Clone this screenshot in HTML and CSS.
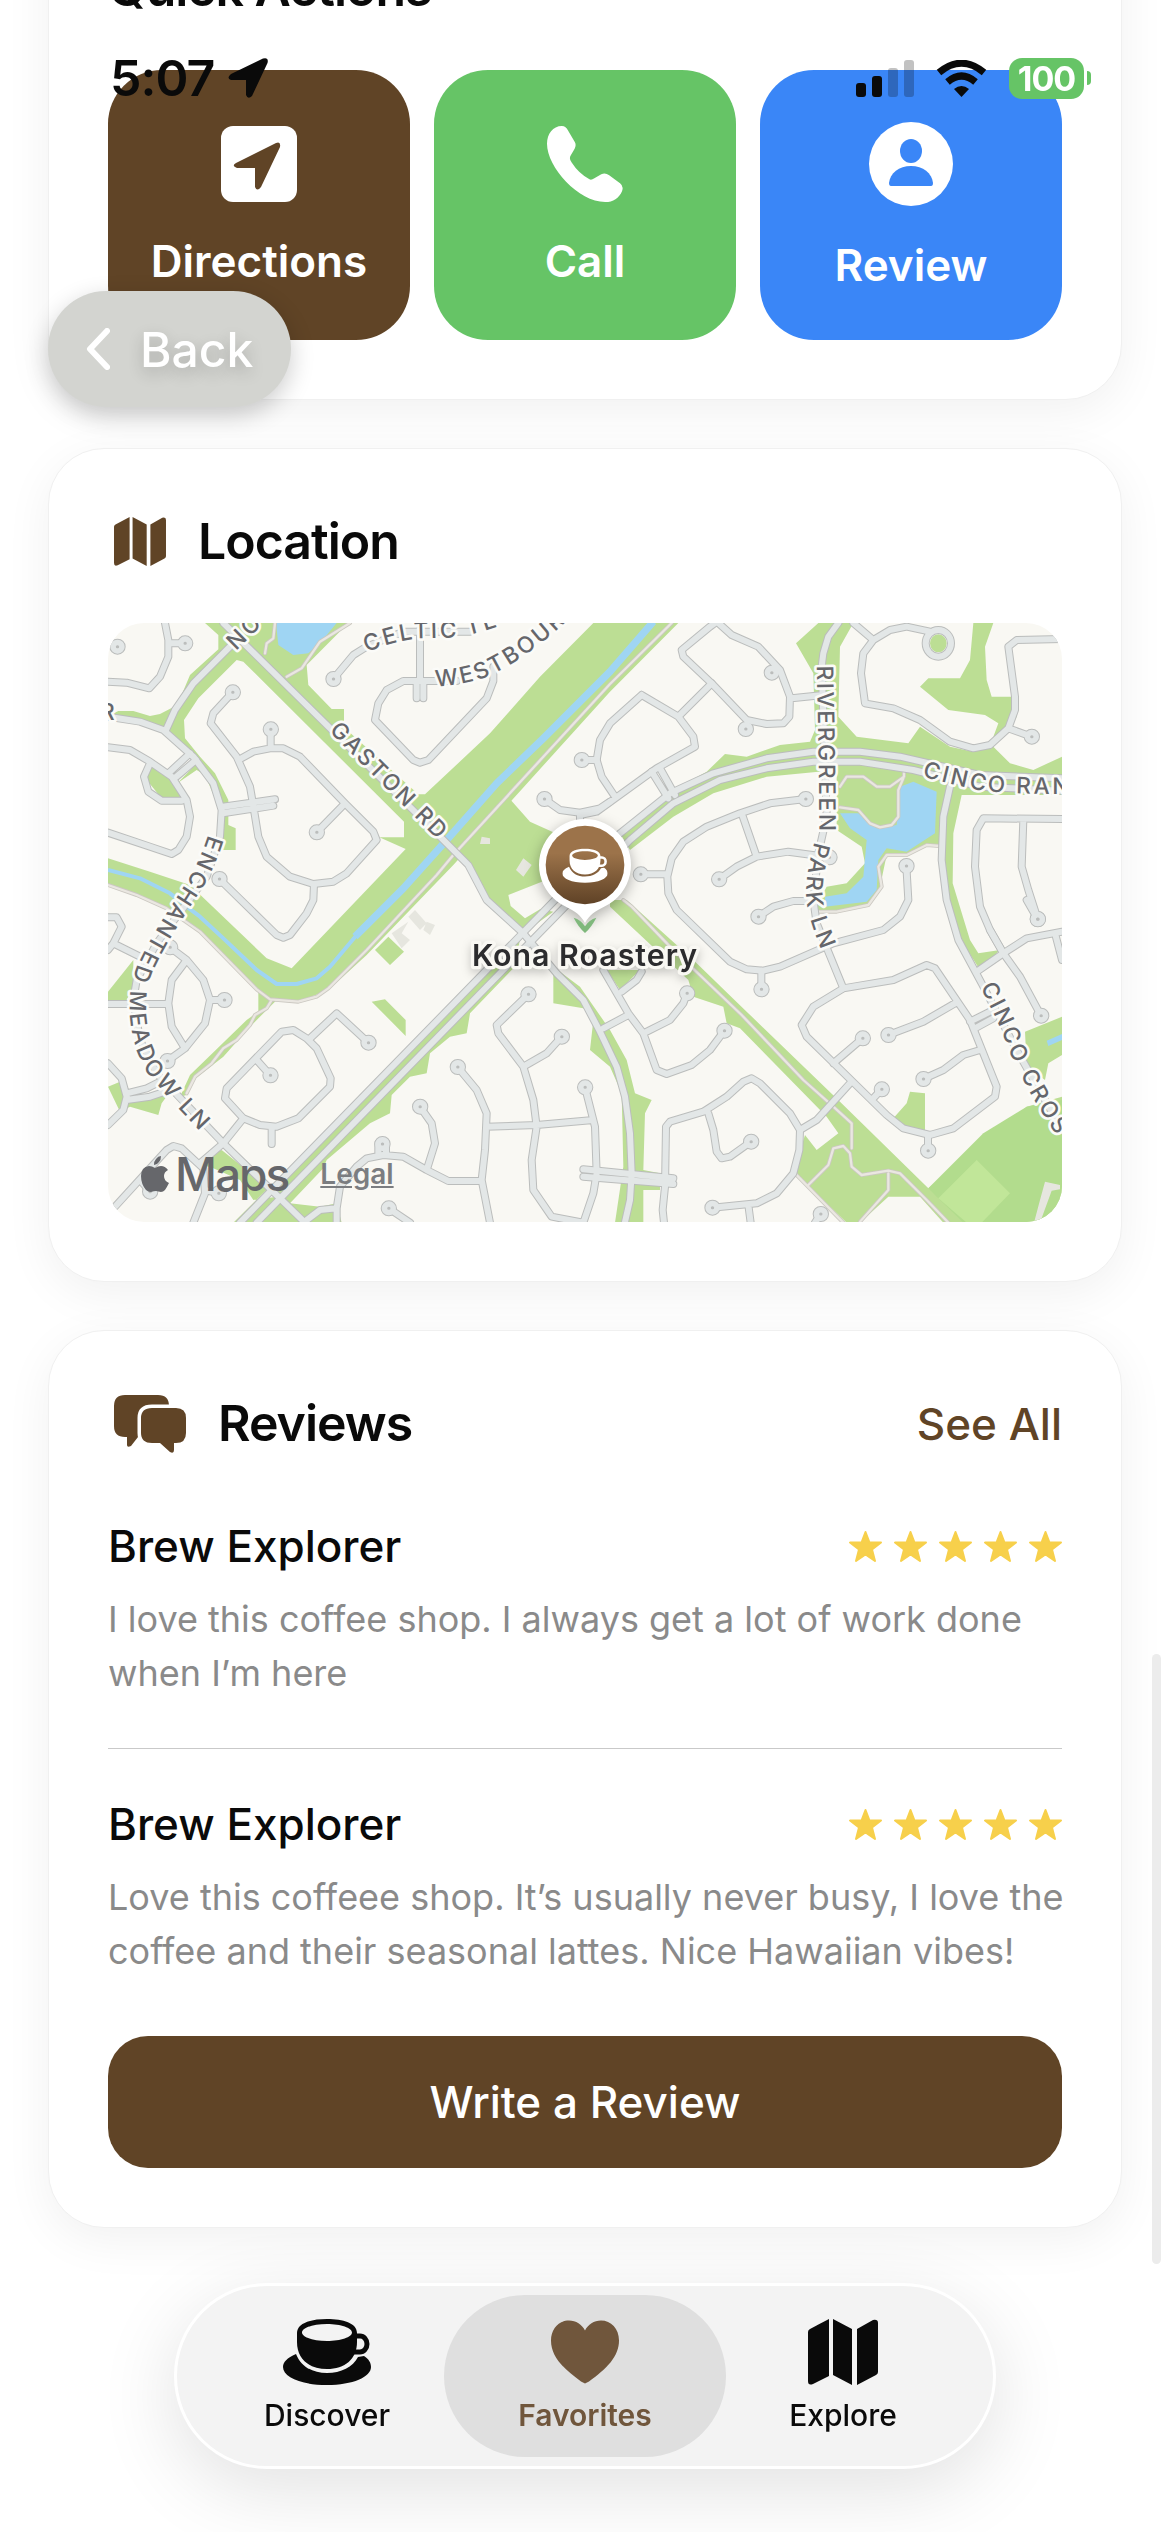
FILE: index.html
```html
<!DOCTYPE html>
<html lang="en">
<head>
    <meta charset="UTF-8">
    <meta name="viewport" content="width=device-width, initial-scale=1.0">
    <title>Kona Roastery</title>
    <link rel="stylesheet" href="styles.css">
</head>
<body>
    <!-- Shared icons -->
    <svg class="sprite" aria-hidden="true">
        <symbol id="icon-cup" viewBox="0 0 88 66">
            <path fill-rule="evenodd" d="M14 14C14 4 28 0 44 0S74 4 74 14V23C74 40 62 50 44 50S14 40 14 23ZM19 13.500C19 18 30 22 44 22S69 18 69 13.500S58 5 44 5S19 9 19 13.500Z"/>
            <path d="M73 17h4a7 8 0 0 1 0 16h-6" fill="none" stroke="currentColor" stroke-width="5"/>
            <path d="M13 35C4 39 0 43 0 48C0 58 18 66 44 66S88 58 88 48C88 44 86 40 81 37L75 38C70 48 58 54 44 54S18 48 13 35Z"/>
        </symbol>
        <symbol id="icon-map" viewBox="0 0 70 66">
            <path d="M0 13Q0 11 2 10L21 0V57L5 65Q0 67 0 62ZM25 0L44 10V66L25 56ZM49 10L65 1Q70 0 70 4V53Q70 55 68 56L49 66Z"/>
        </symbol>
        <symbol id="icon-star" viewBox="0 0 33 31">
            <path stroke="currentColor" stroke-width="2" stroke-linejoin="round" d="M16.500 1L20.500 11.500H32L23 18.500L26 30L16.500 23.500L7 30L10 18.500L1 11.500H12.500Z"/>
        </symbol>
    </svg>

    <header class="status-bar">
        <div class="status-left">
            <time>5:07</time>
            <svg class="icon-arrow" viewBox="0 0 40 40"><path d="M3 16L35 0.500Q41 -1 39.500 5L24 38Q20 42 18 37V22H3Q-2 20 3 16Z"/></svg>
        </div>
        <div class="status-right">
            <svg class="icon-signal" viewBox="0 0 58 37">
                <rect x="0" y="23" width="10" height="14" rx="3"/>
                <rect x="16" y="16" width="10" height="21" rx="3"/>
                <rect x="32" y="8" width="10" height="29" rx="3" opacity=".25"/>
                <rect x="48" y="0" width="10" height="37" rx="3" opacity=".25"/>
            </svg>
            <svg class="icon-wifi" viewBox="0 0 51 37">
                <path d="M3 12.500Q25.500 -6 48 12.500M11.500 22Q25.500 10 39.500 22" fill="none" stroke="currentColor" stroke-width="7"/>
                <path d="M25.500 37L18 29Q25.500 23 33 29Z"/>
            </svg>
            <div class="battery"><span>100</span></div>
        </div>
    </header>

    <button class="back-button" type="button">
        <svg viewBox="0 0 24 42"><path d="M21 3L4 21L21 39"/></svg>
        Back
    </button>

    <main>
        <section class="card">
            <h2>Quick Actions</h2>
            <div class="actions">
                <button class="action directions" type="button">
                    <svg class="icon-76" viewBox="0 0 76 76"><rect width="76" height="76" rx="12"/><path class="cut" d="M15 37L55 17Q60 15 59 21L40 61Q36 66 34 61V42H16Q10 40 15 37Z"/></svg>
                    Directions
                </button>
                <button class="action call" type="button">
                    <svg class="icon-76" viewBox="0 0 77 77"><path d="M15 0C18 0 20 2 21 4L28 16Q30 19 28 23L24 30Q22 33 25 37Q32 48 43 54Q45 55 48 53L55 49Q59 47 63 50L74 58Q78 61 76 66C73 73 67 77 59 77C32 77 0 42 0 18C0 8 6 0 15 0Z"/></svg>
                    Call
                </button>
                <button class="action review" type="button">
                    <svg class="icon-84" viewBox="0 0 84 84"><circle cx="42" cy="42" r="42"/><ellipse class="cut" cx="42" cy="29" rx="11" ry="12"/><path class="cut" d="M20 61C21 51 30 44 42 44S63 51 64 61Q64 64 62 64H22Q20 64 20 61Z"/></svg>
                    Review
                </button>
            </div>
        </section>

        <section class="card">
            <h2><svg class="icon-title-map"><use href="#icon-map"/></svg>Location</h2>
            <div class="map">
                <svg class="map-canvas" viewBox="0 0 2862 1797" preserveAspectRatio="xMidYMid slice">
                    <defs>
                        <!-- Streets, one group per map tile -->
                        <g id="streets">
                            <g transform="translate(-54 -39)">
                                <path d="M400 39L1050 680L1135 765L1190 870L1300 970L1400 1090L1480 1170L1530 1265L1580 1370L1605 1460L1620 1570L1625 1690L1620 1770L1600 1858"/>
                                <path d="M420 110L310 220L255 300L228 360M54 215L110 218L178 235L210 200L235 140V90L225 39M237 100H285"/>
                                <path d="M54 320L150 335L220 360L310 440L370 520L395 600L390 680L350 800L200 1000L140 1110L130 1170L150 1290L200 1390L400 1600L645 1838"/>
                                <path d="M54 412L120 420L180 455L245 500L290 570L300 620L290 680L265 720L245 732L180 710L54 668M180 460L162 500L175 545L215 572H275M300 430L235 490M318 450L250 508"/>
                                <path d="M428 247L370 310L362 340L440 440L480 530L492 600L505 680L530 740L600 800L670 822L730 815L770 790L860 690L850 665L765 580L630 440L580 415H540L490 425L445 450M542 360V415M680 667L765 580M398 590L555 568M398 610L550 587"/>
                                <path d="M388 807L560 975L580 983L600 975L650 910L670 870L672 822M730 207L790 135L830 110L940 65H1140M990 60V213M980 265V213M1000 265V213"/>
                                <path d="M1210 170V213L1190 265L1015 450L990 458L970 450L855 330L865 280L890 240L940 213H1100M1475 450H1520M1363 567L1410 600L1470 608L1530 595L1560 575M1470 608V660"/>
                            </g>
                            <g transform="translate(1416 -69)">
                                <path d="M0 480H50M185 285L90 370L60 420L50 480L65 530L105 590M185 285L295 350L340 410L345 440L230 505L50 635L0 645M295 350L395 250L310 170L305 150L390 80L405 69"/>
                                <path d="M415 69L455 105L535 140L600 210L630 290L628 350L610 370L560 372L500 360L395 250M635 295L730 285M775 69L745 110L730 160L725 200L740 650L715 760L700 900L710 970L790 1165"/>
                                <path d="M820 69L880 120L930 90L980 80L1050 95M880 120L850 160L843 220L855 310L940 325L1020 360L1110 425L1180 445L1230 435L1285 385L1305 330V290L1285 140L1310 120L1446 117M1285 385L1355 410M1037 130a38 40 0 1 0 76 0a38 40 0 1 0 -76 0"/>
                                <path d="M677 597L570 610L480 640L380 680L310 725L275 775L262 830L265 880L290 930L450 1085L500 1108L550 1112L600 1100L760 1030L910 990L960 950L985 900L979 798M182 823H262M485 640L530 770M417 838L470 800L530 770L625 755L748 772M535 950L580 920L640 903H700"/>
                                <path d="M1110 560L1090 650L1085 780L1100 900L1135 1020L1205 1150L1310 1350L1446 1590M1446 657L1210 655L1190 690L1185 800L1200 920L1230 990L1270 1060M1330 660L1325 800L1345 870L1373 957M215 515L265 595M240 505L285 585"/>
                                <path d="M-1020 1868L-80 905L120 700L270 580L400 520L560 475L700 455H840L960 470L1200 525L1446 535M-970 1868L-50 925L150 720L280 610L420 540L560 505L700 485H840L1000 510L1200 560L1446 572"/>
                            </g>
                            <g transform="translate(-54 651)">
                                <path d="M54 232H80L95 260L70 310L54 330M70 310L150 350M240 322L290 360L340 420L360 480L345 550L285 625L232 663M290 360L245 420L235 490L245 560L285 625M54 492H235M360 480H403"/>
                                <path d="M54 670L95 715L110 770L100 810L54 855M110 760L170 745L220 720M110 780L180 770L240 750M330 970L400 910L460 835M575 575L410 745L405 775L460 835L510 855L560 860L625 835L720 740L722 715L680 625L650 595L610 570ZM655 600L740 520L835 608M500 660L541 706M545 860V912"/>
                                <path d="M75 1100L230 930L250 918L275 925L340 985L345 1060L310 1148M180 1055L150 1020M345 1050L386 1060M640 1148L690 1110L740 1105L750 1040L800 980L830 955L880 945L940 950L1010 990L1075 1023H1170M740 1100V1148M865 945V910M888 945V910M1010 990L1035 910L1025 850L990 800M896 1105L960 1148"/>
                                <path d="M1103 681L1160 750L1190 820L1185 930L1175 1020L1200 1148M1190 860L1340 855L1510 840M1315 463L1220 555L1225 580L1300 680L1330 780L1340 860L1325 960L1330 1050L1385 1130L1480 1148L1510 1060L1520 1000L1515 860L1485 742M1300 680L1370 640L1415 590"/>
                            </g>
                            <g transform="translate(1356 831)">
                                <path d="M604 212V268M850 265L1000 240L1100 195L1125 205L1230 360L1310 560L1305 590L1180 685L1110 705L1030 685L980 645L740 410L725 375L760 320L850 265M820 490L908 415M985 405L1090 365L1185 310M1090 537L1150 510L1210 465L1260 450M935 600L965 568M1104 705V752M1230 365L1290 335M1245 385L1300 355"/>
                                <path d="M870 550L770 660L720 690L690 640L600 550L575 535L550 545L500 590L430 635L330 665L318 680L315 860L308 930L312 968M720 690L718 750L700 820L650 880L590 910L457 923M565 915L572 968M445 640L460 690L470 755L485 775L510 770L573 725M782 942L765 968"/>
                                <path d="M1250 215L1330 160L1400 115L1506 95M1290 90L1330 160L1380 230L1443 347M1400 0L1433 58M1485 100L1506 180M130 385L205 345M130 210L205 340L250 400L290 510L320 522L395 495L450 450L493 392M250 400L330 360L370 310L381 280M185 275L230 240L245 215"/>
                                <path d="M70 808L340 835M70 830L340 852"/>
                            </g>
                        </g>
                        <!-- Turning circles at the street ends -->
                        <g id="bulbs">
                            <path transform="translate(-54 -39)" d="M285 100h1M82 110h1M428 247h1M542 358h1M680 667h1M388 807h1M730 207h1M1475 450h1M1363 567h1"/>
                            <path transform="translate(1416 -69)" d="M575 218h1M497 387h1M677 597h1M182 823h1M417 838h1M748 772h1M535 950h1M979 798h1M1355 410h1M1373 957h1"/>
                            <path transform="translate(-54 651)" d="M240 322h1M232 663h1M403 480h1M541 706h1M835 608h1M180 1055h1M386 1060h1M877 912h1M990 800h1M896 1105h1M1103 681h1M1315 463h1M1415 590h1M1485 742h1"/>
                            <path transform="translate(1356 831)" d="M604 268h1M908 415h1M985 405h1M1090 537h1M965 568h1M1104 752h1M457 923h1M573 725h1M782 942h1M1433 58h1M1443 347h1M381 280h1M493 392h1"/>
                        </g>
                        <g id="trails">
                            <path transform="translate(-54 -39)" d="M1745 39L1560 222L1090 735L1040 795L830 1020L715 1135L680 1160L625 1175L540 1168L500 1138L330 965L230 895L140 855L54 825M780 39L690 95L635 175L590 200M555 39L550 85L530 100L525 130M545 1170L530 1195L495 1215L480 1245L440 1290L400 1315L365 1360L315 1400L290 1450"/>
                            <path transform="translate(1416 -69)" d="M780 560L800 530H850L890 560H930L972 530V510M970 535L955 570V650L935 675L900 682L870 670L835 630L780 622M710 935H770L865 915L905 860L895 800L920 765H980L1040 735L1080 738"/>
                            <path transform="translate(1356 831)" d="M190 0L215 20L330 140L545 345L730 540L820 620L875 670V745M745 855L805 795L820 745L850 738L870 760L875 800L905 825L985 812L1020 820L1100 900L1165 968M985 820V870L900 965M705 820L850 968"/>
                        </g>
                        <path id="way-gaston" d="M662 324L1030 692"/>
                        <path id="way-no" d="M384 84L490 -22"/>
                        <path id="way-celtic" d="M776 88Q870 50 940 46L1026 44Q1110 38 1250 -20"/>
                        <path id="way-westbourne" d="M984 190Q1066 186 1130 164Q1280 100 1440 -70"/>
                        <path id="way-enchanted" d="M300 635Q280 700 250 755L160 895Q96 1000 78 1055Q62 1110 66 1180Q74 1280 120 1352L180 1424L300 1550"/>
                        <path id="way-rivergreen" d="M2126 128L2132 411L2134 611L2116 671Q2088 781 2096 831Q2101 891 2156 1020"/>
                        <path id="way-cinco-ranch" d="M2442 460Q2536 486 2626 504Q2746 516 2992 512"/>
                        <path id="way-crossing" d="M2616 1092Q2676 1201 2706 1291L2746 1371Q2786 1451 2900 1620"/>
                        <linearGradient id="coffee" x1="0" y1="0" x2="0" y2="1">
                            <stop offset="0.350" stop-color="#9c734a"/>
                            <stop offset="1" stop-color="#5f4226"/>
                        </linearGradient>
                    </defs>

                    <g class="park">
                        <path transform="translate(-54 -39)" d="M345 39H775L650 165L655 225L725 297H762V352L985 553H1005L1200 370L1350 200L1510 39H1765L1560 245L1090 765L830 1035L715 1140L625 1175L540 1165L500 1140L330 965L230 895L54 825V745L180 785L300 825L410 930L530 1045L605 1075L947 717L868 682H942V635L460 155L440 150L325 265L282 330L285 385L330 440L375 490L415 570V645L437 655V720H390L395 680L380 560L330 470L250 380L150 340L54 318L85 303H130L180 318L210 312L262 285L300 195L385 118V75Z"/>
                        <path transform="translate(-54 -39)" d="M1100 710L1255 562L1320 635L1420 680V790L1255 855L1262 888L1305 925L1350 898L1390 905L1300 970L1190 870L1135 765ZM180 460L245 510L275 560L215 565L170 510ZM262 520L320 480L345 495L390 600V540L330 450Z"/>
                        <path transform="translate(1416 -69)" d="M150 750L120 700L280 570L380 515L435 462L500 470L600 435L690 425L705 390L700 220L648 130L715 69H820L780 140L775 350L830 410L985 430L1020 380L1110 440L1180 455L1240 440L1290 490L1360 510L1446 470V585L1145 585L1120 700L1118 850L1170 1020L1195 1060L1260 1050L1200 1110L1130 1000L1085 850L1080 740L1040 735L970 765L920 765L900 860L860 915L770 935H700L740 860L800 850L855 790L845 740L770 690V510L560 530L400 580L280 650Z"/>
                        <path transform="translate(1416 -69)" d="M1180 69H1240L1215 140L1220 240L1235 290H1300L1310 350L1280 400L1240 410L1255 370L1215 345L1105 330L1020 260L1045 235H1140L1170 180ZM1050 130a25 27 0 1 0 50 0a25 27 0 1 0 -50 0"/>
                        <path transform="translate(-54 651)" d="M54 455L130 360V440L110 480H54ZM505 445L570 470L480 560L400 650L310 720L290 765L270 770L300 705L470 540L505 515ZM54 740L90 725L110 770L240 755L215 790L205 825L120 800L90 815ZM855 330L895 290L942 335L900 375ZM845 485L885 478L947 540V588Z"/>
                        <path transform="translate(-54 651)" d="M1290 300L430 1148H755L740 1090L690 1100L600 1090L700 985L710 960L840 850L900 820L905 765L960 710L1010 700L1020 640L1080 590L1130 580L1140 520L1270 385ZM320 970L395 930L470 990L560 1070L490 1080L450 1020L370 985Z"/>
                        <path transform="translate(1356 831)" d="M-20 200V310L70 325L100 360L90 450L150 500L185 580L190 800L165 968H250V870H300V820L250 810L255 640L275 600L225 580L200 480L150 390L60 260ZM150 0H200L400 180L560 335L840 605L1105 865L1400 620L1506 590V968H1150L1080 890H985L900 968H860L700 815L735 705L770 750L835 700L800 650L540 385L500 370L490 320L400 290L385 240L150 20Z"/>
                        <path transform="translate(1356 831)" d="M1000 655L1040 610L1050 575L1095 580V695L1040 680ZM1395 395L1506 350V465L1465 490L1455 540L1400 500ZM140 210H240L180 270Z"/>
                    </g>
                    <path class="park-dark" transform="translate(1356 831)" d="M1105 865L1270 700L1400 620L1506 600V968H1210L1130 890Z"/>
                    <path class="park-light" transform="translate(1356 831)" d="M1250 780L1350 880L1265 968H1220L1135 895Z"/>
                    <path class="building" transform="translate(-54 -39)" d="M975 900L1010 940L990 960L955 920ZM1010 935L1035 945L1020 975L1000 960ZM955 935L935 970L960 990L935 1015L905 970ZM1300 745L1325 765L1300 800L1278 780ZM1175 680L1200 685V702H1170Z"/>
                    <path class="building" transform="translate(1356 831)" d="M1455 845L1500 855V868L1475 872L1440 968H1422L1440 900Z"/>

                    <g class="water">
                        <path transform="translate(-54 -39)" d="M558 39H740L690 100L655 130L610 135L565 105Z"/>
                        <path transform="translate(1416 -69)" d="M780 640H835L890 685L950 675L960 560L1000 545L1070 575L1065 700L980 755L920 745L895 780L890 870L860 905L735 920V890L800 880L850 830L860 720L810 685Z"/>
                        <path transform="translate(1356 831)" d="M1460 422L1506 402V420L1465 438Z"/>
                    </g>
                    <path class="river" transform="translate(-54 -39)" d="M1690 35L1560 185L1360 385L1220 520L1070 690L940 835L795 980"/>
                    <path class="creek" transform="translate(-54 -39)" d="M800 975L720 1070L680 1105L620 1122H560L500 1080L400 985L330 920L290 890L240 850L150 805L54 780"/>

                    <use href="#trails" class="trail-case"/>
                    <use href="#trails" class="trail"/>
                    <use href="#streets" class="street-case"/>
                    <use href="#bulbs" class="bulb-case"/>
                    <use href="#streets" class="street"/>
                    <use href="#bulbs" class="bulb"/>
                    <use href="#bulbs" class="bulb-dot"/>

                    <g class="street-names">
                        <text><textPath href="#way-gaston">GASTON RD</textPath></text>
                        <text><textPath href="#way-no">NO</textPath></text>
                        <text><textPath href="#way-celtic">CELTIC TE</textPath></text>
                        <text><textPath href="#way-westbourne">WESTBOUR</textPath></text>
                        <text><textPath href="#way-enchanted">ENCHANTED MEADOW LN</textPath></text>
                        <text><textPath href="#way-rivergreen">RIVERGREEN PARK LN</textPath></text>
                        <text><textPath href="#way-cinco-ranch">CINCO RAN</textPath></text>
                        <text><textPath href="#way-crossing">CINCO CROS</textPath></text>
                        <text x="-24" y="292">R</text>
                    </g>

                    <g class="pin" transform="translate(1431 726)">
                        <path class="pin-body" d="M0 174C-14 150 -28 140 -60 124A138 138 0 1 1 60 124C28 140 14 150 0 174Z"/>
                        <path class="pin-shade" d="M-34 158Q-12 164 0 184Q12 164 34 158Q20 186 0 204Q-20 186 -34 158Z"/>
                        <circle r="118" fill="url(#coffee)"/>
                        <use class="pin-cup" href="#icon-cup" x="-68" y="-50" width="136" height="104"/>
                        <text class="pin-name" y="302">Kona Roastery</text>
                    </g>
                </svg>
                <div class="attribution">
                    <svg viewBox="0 0 28 36"><path d="M20 0Q20 4 18 6Q16 9 13 9Q13 5 15 3Q17 0 20 0ZM14 12Q17 10 20 10Q24 10 27 14Q23 16 23 20Q23 25 28 27Q26 31 24 34Q22 36 20 36L15 35Q13 35 10 36Q7 36 5 34Q0 28 0 20Q0 11 8 10Q11 10 14 12Z"/></svg>
                    <span>Maps</span>
                    <a href="#legal">Legal</a>
                </div>
            </div>
        </section>

        <section class="card">
            <div class="reviews-header">
                <h2>
                    <svg class="icon-bubbles" viewBox="0 0 72 58">
                        <path d="M11 0H44Q55 0 55 11V42H24L17 51Q13 53 13 50V42H11Q0 42 0 31V11Q0 0 11 0Z"/>
                        <path class="front" d="M38 13H62Q72 13 72 23V38Q72 48 62 48H60V55Q60 59 56 57L46 48H38Q27 48 27 38V23Q27 13 38 13Z"/>
                    </svg>
                    Reviews
                </h2>
                <a href="#all-reviews">See All</a>
            </div>

            <article class="review-item">
                <div class="review-top">
                    <h3>Brew Explorer</h3>
                    <div class="stars" role="img" aria-label="5 out of 5 stars">
                        <svg><use href="#icon-star"/></svg>
                        <svg><use href="#icon-star"/></svg>
                        <svg><use href="#icon-star"/></svg>
                        <svg><use href="#icon-star"/></svg>
                        <svg><use href="#icon-star"/></svg>
                    </div>
                </div>
                <p>I love this coffee shop. I always get a lot of work done when I’m here</p>
            </article>

            <article class="review-item">
                <div class="review-top">
                    <h3>Brew Explorer</h3>
                    <div class="stars" role="img" aria-label="5 out of 5 stars">
                        <svg><use href="#icon-star"/></svg>
                        <svg><use href="#icon-star"/></svg>
                        <svg><use href="#icon-star"/></svg>
                        <svg><use href="#icon-star"/></svg>
                        <svg><use href="#icon-star"/></svg>
                    </div>
                </div>
                <p>Love this coffeee shop. It’s usually never busy, I love the coffee and their seasonal lattes. Nice Hawaiian vibes!</p>
            </article>

            <button class="write-button" type="button">Write a Review</button>
        </section>
    </main>

    <div class="scroll-thumb"></div>

    <nav class="tab-bar">
        <a href="#discover"><svg class="tab-cup"><use href="#icon-cup"/></svg>Discover</a>
        <a href="#favorites" class="active"><svg class="tab-heart" viewBox="0 0 68 63"><path d="M34 63L30 61C12 48 0 36 0 20C0 8 8 0 18 0C25 0 31 4 34 10C37 4 43 0 50 0C60 0 68 8 68 20C68 36 56 48 38 61Z"/></svg>Favorites</a>
        <a href="#explore"><svg class="tab-map"><use href="#icon-map"/></svg>Explore</a>
    </nav>
</body>
</html>
```
FILE: styles.css
```css
* {
    box-sizing: border-box;
}

body {
    font-family: Inter, 'Liberation Sans', sans-serif;
    margin: 0;
    background: #fff;
    color: #0a0a0a;
    min-height: 100vh;
    overflow-x: hidden;
}

svg {
    display: block;
    flex: none;
    fill: currentColor;
}

button {
    font-family: inherit;
    border: none;
    cursor: pointer;
}

a {
    color: inherit;
    text-decoration: none;
}

h2,
h3,
p {
    margin: 0;
}

.sprite {
    position: absolute;
    width: 0;
    height: 0;
}

/* Status bar */
.status-bar {
    position: fixed;
    top: 0;
    left: 0;
    right: 0;
    z-index: 20;
    display: flex;
    justify-content: space-between;
    align-items: center;
    padding: 48px 79px 0 110px;
    height: 108px;
}

.status-left,
.status-right {
    display: flex;
    align-items: center;
}

.status-left {
    gap: 14px;
    font-size: 50px;
    font-weight: 600;
    letter-spacing: -1px;
}

.icon-arrow {
    width: 40px;
    height: 40px;
}

.status-right {
    gap: 22px;
}

.icon-signal {
    width: 58px;
    height: 37px;
}

.icon-wifi {
    width: 51px;
    height: 37px;
}

.battery {
    display: flex;
    align-items: center;
    gap: 3px;
}

.battery span {
    width: 75px;
    background: #66c466;
    color: #fff;
    border-radius: 13px;
    font-size: 34px;
    line-height: 41px;
    font-weight: 700;
    text-align: center;
    letter-spacing: -1px;
}

.battery::after {
    content: "";
    width: 4px;
    height: 14px;
    background: #66c466;
    border-radius: 0 4px 4px 0;
}

/* Back button */
.back-button {
    position: fixed;
    top: 291px;
    left: 48px;
    z-index: 10;
    display: flex;
    align-items: center;
    gap: 30px;
    height: 116px;
    padding: 0 38px;
    border-radius: 58px;
    background: #d3d4d0;
    color: #fff;
    font-size: 48px;
    font-weight: 500;
    box-shadow: 0 8px 24px rgba(0, 0, 0, 0.2);
    text-shadow: 0 6px 16px rgba(0, 0, 0, 0.2);
}

.back-button svg {
    width: 24px;
    height: 42px;
    fill: none;
    stroke: #fff;
    stroke-width: 6;
    stroke-linecap: round;
    stroke-linejoin: round;
}

/* Cards, the first one is scrolled under the status bar */
main {
    display: flex;
    flex-direction: column;
    gap: 48px;
    margin-top: -105px;
    padding: 0 48px 304px;
}

.card {
    padding: 59px;
    background: #fff;
    border: 1px solid #f0f0f0;
    border-radius: 56px;
    box-shadow: 0 12px 48px rgba(0, 0, 0, 0.06);
}

.card h2 {
    display: flex;
    align-items: center;
    font-size: 50px;
    line-height: 67px;
    font-weight: 600;
    letter-spacing: -1px;
}

.card > h2 {
    margin-bottom: 48px;
}

.icon-title-map {
    width: 52px;
    height: 49px;
    margin: 0 32px 0 6px;
    color: #604426;
}

.icon-bubbles {
    width: 72px;
    height: 58px;
    margin: 0 32px 0 6px;
    overflow: visible;
    color: #604426;
}

.icon-bubbles .front {
    stroke: #fff;
    stroke-width: 7;
    paint-order: stroke;
}

/* Quick actions */
.actions {
    display: grid;
    grid-template-columns: repeat(3, 1fr);
    gap: 24px;
}

.action {
    display: flex;
    flex-direction: column;
    align-items: center;
    justify-content: center;
    gap: 31px;
    height: 270px;
    padding: 4px 0 0;
    border-radius: 54px;
    color: #fff;
    font-size: 44px;
    line-height: 56px;
    font-weight: 600;
}

.directions {
    background: #604426;
}

.call {
    background: #66c466;
}

.review {
    background: #3a86f7;
}

.icon-76 {
    width: 76px;
    height: 76px;
}

.icon-84 {
    width: 84px;
    height: 84px;
}

.directions .cut {
    fill: #604426;
}

.review .cut {
    fill: #3a86f7;
}

/* Map */
.map {
    position: relative;
    aspect-ratio: 954 / 599;
    border-radius: 36px;
    overflow: hidden;
    background: #f9f8f3;
}

.map-canvas {
    width: 100%;
    height: 100%;
    stroke-linejoin: round;
}

.park {
    fill: #bcde94;
}

.park-dark {
    fill: #b2dc8d;
}

.park-light {
    fill: #c1e699;
}

.building {
    fill: #e6e6df;
}

.water {
    fill: #9fd5f3;
}

.river,
.creek {
    fill: none;
    stroke: #9fd5f3;
    stroke-width: 22;
}

.creek {
    stroke-width: 12;
}

.trail-case,
.trail,
.street-case,
.street,
.bulb-case,
.bulb,
.bulb-dot {
    fill: none;
    stroke-linecap: round;
}

.trail-case {
    stroke: #cbc8c1;
    stroke-width: 12;
}

.trail {
    stroke: #eae7e1;
    stroke-width: 7;
}

.street-case {
    stroke: #bbbdbc;
    stroke-width: 24;
}

.street {
    stroke: #e3e7e7;
    stroke-width: 18;
}

.bulb-case {
    stroke: #bbbdbc;
    stroke-width: 48;
}

.bulb {
    stroke: #e3e7e7;
    stroke-width: 42;
}

.bulb-dot {
    stroke: #bbbdbc;
    stroke-width: 9;
}

.street-names text {
    font-size: 68px;
    font-weight: 500;
    letter-spacing: 8px;
    fill: #65666b;
    stroke: #fbfbf8;
    stroke-width: 16;
    paint-order: stroke;
}

.pin-body {
    fill: #fff;
    filter: drop-shadow(0 12px 20px rgba(0, 0, 0, 0.3));
}

.pin-shade {
    fill: #7fb87c;
}

.pin-cup {
    color: #fff;
    fill: #fff;
}

.pin-name {
    font-size: 91px;
    font-weight: 600;
    letter-spacing: 3px;
    text-anchor: middle;
    fill: #2c2c2e;
    stroke: #f9f8f3;
    stroke-width: 20;
    paint-order: stroke;
    filter: drop-shadow(0 12px 14px rgba(0, 0, 0, 0.2));
}

.attribution {
    position: absolute;
    left: 33px;
    bottom: 20px;
    display: flex;
    align-items: center;
    color: #66676b;
    font-size: 46px;
    line-height: 56px;
    font-weight: 500;
    letter-spacing: -2px;
}

.attribution svg {
    width: 28px;
    height: 36px;
    margin-right: 6px;
}

.attribution a {
    margin-left: 32px;
    color: #7b7d80;
    font-size: 28px;
    font-weight: 600;
    letter-spacing: 0;
    text-decoration: underline;
}

/* Reviews */
.reviews-header {
    display: flex;
    justify-content: space-between;
    align-items: center;
    margin-bottom: 62px;
}

.reviews-header a {
    color: #604426;
    font-size: 44px;
    font-weight: 500;
}

.review-item + .review-item {
    margin-top: 48px;
    padding-top: 48px;
    border-top: 1px solid #c9c9c9;
}

.review-top {
    display: flex;
    justify-content: space-between;
    align-items: center;
    margin-bottom: 18px;
}

.review-top h3 {
    font-size: 44px;
    line-height: 55px;
    font-weight: 500;
}

.stars {
    display: flex;
    gap: 12px;
    color: #f7d04b;
}

.stars svg {
    width: 33px;
    height: 33px;
}

.review-item p {
    margin-right: -8px;
    color: #8a8a8a;
    font-size: 36px;
    line-height: 54px;
}

.write-button {
    width: 100%;
    height: 132px;
    margin-top: 58px;
    border-radius: 40px;
    background: #604426;
    color: #fff;
    font-size: 44px;
    font-weight: 500;
}

.scroll-thumb {
    position: fixed;
    top: 1654px;
    right: 9px;
    width: 9px;
    height: 610px;
    border-radius: 5px;
    background: #ececec;
}

/* Tab bar */
.tab-bar {
    position: fixed;
    left: 50%;
    bottom: 63px;
    transform: translateX(-50%);
    z-index: 10;
    display: flex;
    padding: 9px;
    background: #f3f3f3;
    border: 3px solid #fff;
    border-radius: 93px;
    box-shadow: 0 20px 80px rgba(0, 0, 0, 0.12);
}

.tab-bar a {
    display: flex;
    flex-direction: column;
    align-items: center;
    justify-content: center;
    gap: 12px;
    width: 282px;
    height: 162px;
    border-radius: 81px;
    font-size: 30px;
    line-height: 36px;
    font-weight: 500;
}

.tab-bar a + a {
    margin-left: -24px;
}

.tab-bar .active {
    background: #dfdfdf;
    color: #70563c;
    font-weight: 600;
}

.tab-cup {
    width: 88px;
    height: 66px;
}

.tab-heart {
    width: 68px;
    height: 66px;
}

.tab-map {
    width: 70px;
    height: 66px;
}
```
